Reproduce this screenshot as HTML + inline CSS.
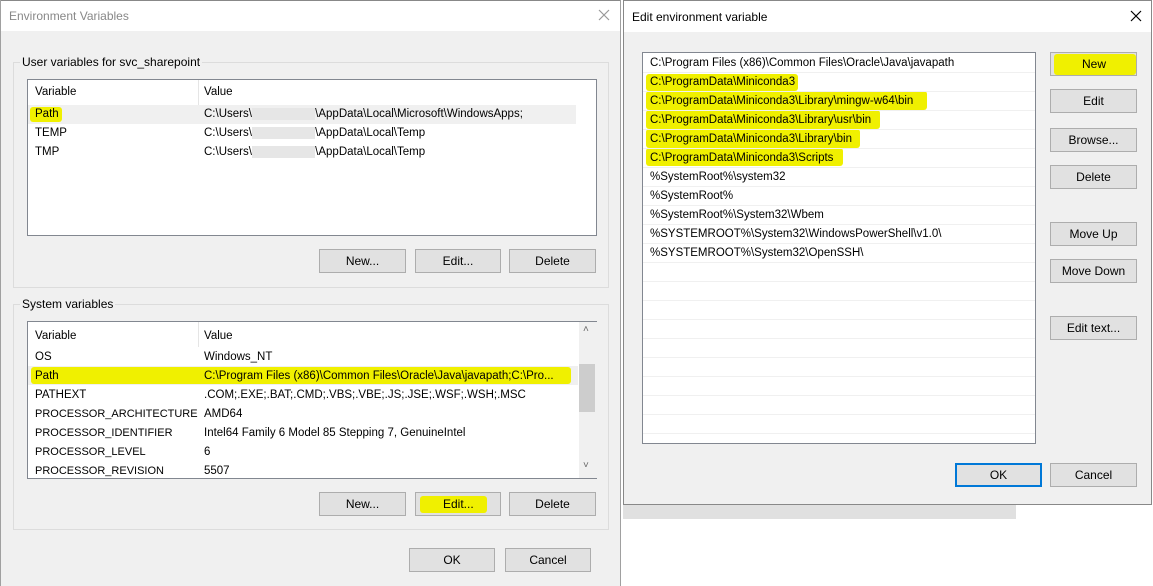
<!DOCTYPE html>
<html><head><meta charset="utf-8"><style>
*{margin:0;padding:0;box-sizing:border-box}
body{width:1153px;height:586px;background:#fff;position:relative;overflow:hidden;font-family:"Liberation Sans",sans-serif;font-size:11.5px;color:#000}
.a{position:absolute;white-space:nowrap}
.btn{position:absolute;background:#e1e1e1;border:1px solid #adadad;text-align:center;line-height:22px;font-size:12px}
.hl{position:absolute;background:#f0f000;border-radius:3px}
.list{position:absolute;background:#fff;border:1px solid #828790}
.grp{position:absolute;border:1px solid #dcdcdc}
.lbl{position:absolute;background:#f0f0f0;padding:0 2px;font-size:12px}
.row{position:absolute;left:0;right:0;height:1px;background:#f0f0f0}
.blur{color:transparent;background:#e6e6e6}
</style></head><body>
<!-- left dialog -->
<div class="a" style="left:0;top:0;width:621px;height:586px;background:#f0f0f0;border-right:1px solid #a0a0a0;border-left:1px solid #a0a0a0"></div>
<div class="a" style="left:1px;top:0;width:619px;height:31px;background:#fff;border-top:1px solid #888"></div>
<div class="a" style="left:9px;top:9px;font-size:12px;color:#888">Environment Variables</div>
<svg class="a" style="left:598px;top:9px" width="12" height="12"><path d="M1 1L11 11M11 1L1 11" stroke="#999" stroke-width="1.2"/></svg>

<div class="grp" style="left:13px;top:62px;width:596px;height:226px"></div>
<div class="lbl" style="left:20px;top:55px">User variables for svc_sharepoint</div>
<div class="list" style="left:27px;top:79px;width:570px;height:157px">
<div class="a" style="left:0;top:25px;width:548px;height:19px;background:#f0f0f0"></div>
<div class="a" style="left:170px;top:0;width:1px;height:25px;background:#e5e5e5"></div>
<div class="hl" style="left:2px;top:27px;width:32px;height:15px"></div>
<div class="a" style="left:7px;top:6px">Variable</div><div class="a" style="left:176px;top:6px">Value</div>
<div class="a" style="left:7px;top:28px">Path</div><div class="a" style="left:176px;top:28px">C:\Users\<span class="blur">xxxxxxxxxxx</span>\AppData\Local\Microsoft\WindowsApps;</div>
<div class="a" style="left:7px;top:47px">TEMP</div><div class="a" style="left:176px;top:47px">C:\Users\<span class="blur">xxxxxxxxxxx</span>\AppData\Local\Temp</div>
<div class="a" style="left:7px;top:66px">TMP</div><div class="a" style="left:176px;top:66px">C:\Users\<span class="blur">xxxxxxxxxxx</span>\AppData\Local\Temp</div>
</div>
<div class="btn" style="left:319px;top:249px;width:87px;height:24px">New...</div>
<div class="btn" style="left:415px;top:249px;width:86px;height:24px">Edit...</div>
<div class="btn" style="left:509px;top:249px;width:87px;height:24px">Delete</div>

<div class="grp" style="left:13px;top:304px;width:596px;height:226px"></div>
<div class="lbl" style="left:20px;top:297px">System variables</div>
<div class="list" style="left:27px;top:321px;width:570px;height:158px">
<div class="a" style="left:170px;top:0;width:1px;height:25px;background:#e5e5e5"></div>
<div class="a" style="left:0;top:44px;width:550px;height:19px;background:#f0f0f0"></div>
<div class="hl" style="left:3px;top:45px;width:540px;height:17px"></div>
<div class="a" style="left:551px;top:0;width:18px;height:156px;background:#f0f0f0"></div>
<div class="a" style="left:551px;top:42px;width:16px;height:48px;background:#cdcdcd"></div>
<div class="a" style="left:555px;top:2px;font-size:10px;color:#666">˄</div>
<div class="a" style="left:555px;top:138px;font-size:10px;color:#666">˅</div>
<div class="a" style="left:7px;top:8px">Variable</div><div class="a" style="left:176px;top:8px">Value</div>
<div class="a" style="left:7px;top:29px">OS</div><div class="a" style="left:176px;top:29px">Windows_NT</div>
<div class="a" style="left:7px;top:48px">Path</div><div class="a" style="left:176px;top:48px">C:\Program Files (x86)\Common Files\Oracle\Java\javapath;C:\Pro...</div>
<div class="a" style="left:7px;top:67px">PATHEXT</div><div class="a" style="left:176px;top:67px">.COM;.EXE;.BAT;.CMD;.VBS;.VBE;.JS;.JSE;.WSF;.WSH;.MSC</div>
<div class="a" style="left:7px;top:86px;font-size:11px">PROCESSOR_ARCHITECTURE</div><div class="a" style="left:176px;top:86px">AMD64</div>
<div class="a" style="left:7px;top:105px;font-size:11px">PROCESSOR_IDENTIFIER</div><div class="a" style="left:176px;top:105px">Intel64 Family 6 Model 85 Stepping 7, GenuineIntel</div>
<div class="a" style="left:7px;top:124px;font-size:11px">PROCESSOR_LEVEL</div><div class="a" style="left:176px;top:124px">6</div>
<div class="a" style="left:7px;top:143px;font-size:11px">PROCESSOR_REVISION</div><div class="a" style="left:176px;top:143px">5507</div>
</div>
<div class="btn" style="left:319px;top:492px;width:87px;height:24px">New...</div>
<div class="btn" style="left:415px;top:492px;width:86px;height:24px">Edit...</div>
<div class="hl" style="left:420px;top:496px;width:67px;height:17px"></div>
<div class="a" style="left:443px;top:497px;font-size:12px">Edit...</div>
<div class="btn" style="left:509px;top:492px;width:87px;height:24px">Delete</div>
<div class="btn" style="left:409px;top:548px;width:86px;height:24px">OK</div>
<div class="btn" style="left:505px;top:548px;width:86px;height:24px">Cancel</div>

<!-- behind strip -->
<div class="a" style="left:623px;top:500px;width:393px;height:19px;background:#e0e0e0"></div>

<!-- right dialog -->
<div class="a" style="left:623px;top:0;width:529px;height:505px;background:#f0f0f0;border:1px solid #888"></div>
<div class="a" style="left:624px;top:1px;width:527px;height:31px;background:#fff"></div>
<div class="a" style="left:632px;top:10px;font-size:12px">Edit environment variable</div>
<svg class="a" style="left:1130px;top:10px" width="12" height="12"><path d="M1 1L11 11M11 1L1 11" stroke="#000" stroke-width="1.2"/></svg>
<div class="list" style="left:642px;top:52px;width:394px;height:392px">
<div class="hl" style="left:3px;top:21px;width:152px;height:17px"></div>
<div class="hl" style="left:3px;top:38px;width:281px;height:19px"></div>
<div class="hl" style="left:3px;top:57px;width:234px;height:19px"></div>
<div class="hl" style="left:3px;top:76px;width:214px;height:19px"></div>
<div class="hl" style="left:3px;top:95px;width:197px;height:18px"></div>
<div class="row" style="top:19px"></div><div class="row" style="top:38px"></div><div class="row" style="top:57px"></div><div class="row" style="top:76px"></div><div class="row" style="top:95px"></div><div class="row" style="top:114px"></div><div class="row" style="top:133px"></div><div class="row" style="top:152px"></div><div class="row" style="top:171px"></div><div class="row" style="top:190px"></div><div class="row" style="top:209px"></div><div class="row" style="top:228px"></div><div class="row" style="top:247px"></div><div class="row" style="top:266px"></div><div class="row" style="top:285px"></div><div class="row" style="top:304px"></div><div class="row" style="top:323px"></div><div class="row" style="top:342px"></div><div class="row" style="top:361px"></div><div class="row" style="top:380px"></div>
<div class="a" style="left:7px;top:4px">C:\Program Files (x86)\Common Files\Oracle\Java\javapath</div>
<div class="a" style="left:7px;top:23px">C:\ProgramData\Miniconda3</div>
<div class="a" style="left:7px;top:42px">C:\ProgramData\Miniconda3\Library\mingw-w64\bin</div>
<div class="a" style="left:7px;top:61px">C:\ProgramData\Miniconda3\Library\usr\bin</div>
<div class="a" style="left:7px;top:80px">C:\ProgramData\Miniconda3\Library\bin</div>
<div class="a" style="left:7px;top:99px">C:\ProgramData\Miniconda3\Scripts</div>
<div class="a" style="left:7px;top:118px">%SystemRoot%\system32</div>
<div class="a" style="left:7px;top:137px">%SystemRoot%</div>
<div class="a" style="left:7px;top:156px">%SystemRoot%\System32\Wbem</div>
<div class="a" style="left:7px;top:175px">%SYSTEMROOT%\System32\WindowsPowerShell\v1.0\</div>
<div class="a" style="left:7px;top:194px">%SYSTEMROOT%\System32\OpenSSH\</div>
</div>
<div class="btn" style="left:1050px;top:52px;width:87px;height:24px"></div>
<div class="hl" style="left:1054px;top:54px;width:82px;height:21px"></div>
<div class="a" style="left:1082px;top:57px;font-size:12px">New</div>
<div class="btn" style="left:1050px;top:89px;width:87px;height:24px">Edit</div>
<div class="btn" style="left:1050px;top:128px;width:87px;height:24px">Browse...</div>
<div class="btn" style="left:1050px;top:165px;width:87px;height:24px">Delete</div>
<div class="btn" style="left:1050px;top:222px;width:87px;height:24px">Move Up</div>
<div class="btn" style="left:1050px;top:259px;width:87px;height:24px">Move Down</div>
<div class="btn" style="left:1050px;top:316px;width:87px;height:24px">Edit text...</div>
<div class="btn" style="left:955px;top:463px;width:87px;height:24px;border:2px solid #0078d7;line-height:20px">OK</div>
<div class="btn" style="left:1050px;top:463px;width:87px;height:24px">Cancel</div>
</body></html>
